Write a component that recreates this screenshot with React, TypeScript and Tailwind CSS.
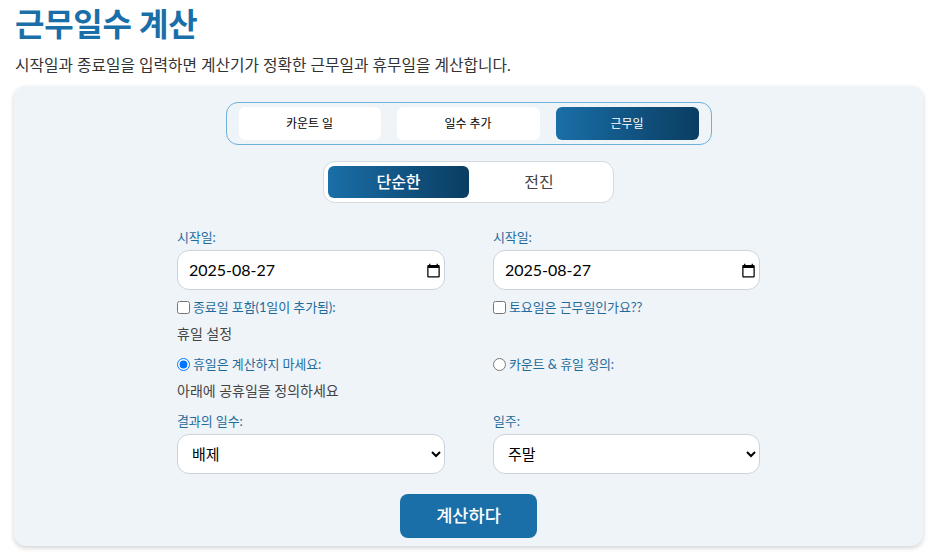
const FONT = "font-['Lato','Noto_Sans_CJK_KR',sans-serif]";

const fieldClass =
  "block w-full h-[40px] rounded-[12px] border border-[#ccd3dc] bg-white text-black outline-none";

function Tab({ label, active, width }: { label: string; active?: boolean; width: string }) {
  return (
    <button
      className={
        active
          ? `${width} h-[33px] rounded-[6px] bg-gradient-to-r from-[#1a6fa8] to-[#0a3d62] text-[12px] text-white`
          : `${width} h-[33px] rounded-[6px] bg-white text-[12px] text-black`
      }
    >
      {label}
    </button>
  );
}

function Label({ children }: { children: string }) {
  return <label className="block text-[13px] leading-[16px] tracking-[-0.1px] text-[#1f6c9c]">{children}</label>;
}

function DateField({ value }: { value: string }) {
  return (
    <div className={`${fieldClass} mt-[5px] flex items-center pl-[11px] pr-[3px]`}>
      <input readOnly value={value} className="min-w-0 flex-1 text-[16px] leading-[20px] outline-none" />
      <svg viewBox="0 0 24 24" className="h-[15px] w-[15px] shrink-0" fill="currentColor">
        <path d="M20 3h-1V1h-2v2H7V1H5v2H4c-1.1 0-2 .9-2 2v16c0 1.1.9 2 2 2h16c1.1 0 2-.9 2-2V5c0-1.1-.9-2-2-2zm0 18H4V8h16v13z" />
      </svg>
    </div>
  );
}

export default function App() {
  return (
    <div className={`${FONT} h-[553px] overflow-hidden bg-white pl-[14px] pr-[8px]`}>
      <h1 className="pl-[1px] pt-[4px] text-[32px] leading-[40px] font-bold tracking-[-0.3px] text-[#1a6fa8]">근무일수 계산</h1>
      <p className="mt-[9px] pl-[1px] text-[15.75px] leading-[24px] text-[#333]">
        시작일과 종료일을 입력하면 계산기가 정확한 근무일과 휴무일을 계산합니다.
      </p>

      <div className="mt-[9px] h-[460px] rounded-[12px] bg-[#eff4f9] pt-[16px] shadow-[0_2px_5px_rgba(0,0,0,0.18)]">
        <div className="mx-auto flex h-[43px] w-[486px] items-center justify-end gap-[16px] rounded-[12px] border border-[#6db0d8] pr-[12px]">
          <Tab label="카운트 일" width="w-[142px]" />
          <Tab label="일수 추가" width="w-[143px]" />
          <Tab label="근무일" width="w-[143px]" active />
        </div>

        <div className="mx-auto mt-[16px] flex h-[42px] w-[291px] items-center rounded-[12px] border border-[#d5d9de] bg-white pl-[4px] pr-[4px]">
          <button className="h-[32px] w-[141px] rounded-[6px] bg-gradient-to-r from-[#1a6fa8] to-[#0a3d62] text-[16px] font-medium text-white">
            단순한
          </button>
          <button className="h-[32px] flex-1 text-[16px] text-[#444]">전진</button>
        </div>

        <div className="mx-auto mt-[26px] grid w-[583px] grid-cols-[268px_267px] gap-x-[48px]">
          <div>
            <Label>시작일:</Label>
            <DateField value="2025-08-27" />
          </div>
          <div>
            <Label>시작일:</Label>
            <DateField value="2025-08-27" />
          </div>

          <div className="mt-[8px] flex h-[18px] items-center gap-[3px]">
            <input type="checkbox" className="m-0 h-[13px] w-[13px] appearance-auto" />
            <Label>종료일 포함(1일이 추가됨):</Label>
          </div>
          <div className="mt-[8px] flex h-[18px] items-center gap-[3px]">
            <input type="checkbox" className="m-0 h-[13px] w-[13px] appearance-auto" />
            <Label>토요일은 근무일인가요??</Label>
          </div>

          <p className="col-span-2 mt-[8px] text-[14px] leading-[20px] text-[#444]">휴일 설정</p>

          <div className="mt-[11px] flex h-[18px] items-center gap-[3px]">
            <input type="radio" name="holiday" defaultChecked className="m-0 h-[13px] w-[13px] appearance-auto" />
            <Label>휴일은 계산하지 마세요:</Label>
          </div>
          <div className="mt-[11px] flex h-[18px] items-center gap-[3px]">
            <input type="radio" name="holiday" className="m-0 h-[13px] w-[13px] appearance-auto" />
            <Label>카운트 & 휴일 정의:</Label>
          </div>

          <p className="col-span-2 mt-[8px] text-[14px] leading-[20px] text-[#444]">아래에 공휴일을 정의하세요</p>

          <div className="mt-[12px]">
            <Label>결과의 일수:</Label>
            <select defaultValue="배제" className={`${fieldClass} mt-[5px] appearance-auto px-[10px] text-[15px]`}>
              <option>배제</option>
              <option>포함</option>
            </select>
          </div>
          <div className="mt-[12px]">
            <Label>일주:</Label>
            <select defaultValue="주말" className={`${fieldClass} mt-[5px] appearance-auto px-[10px] text-[15px]`}>
              <option>주말</option>
              <option>평일</option>
            </select>
          </div>
        </div>

        <div className="mt-[20px] flex justify-center">
          <button className="h-[44px] w-[137px] rounded-[8px] bg-[#1a6fa8] text-[17.6px] font-medium text-white">
            계산하다
          </button>
        </div>
      </div>
    </div>
  );
}
